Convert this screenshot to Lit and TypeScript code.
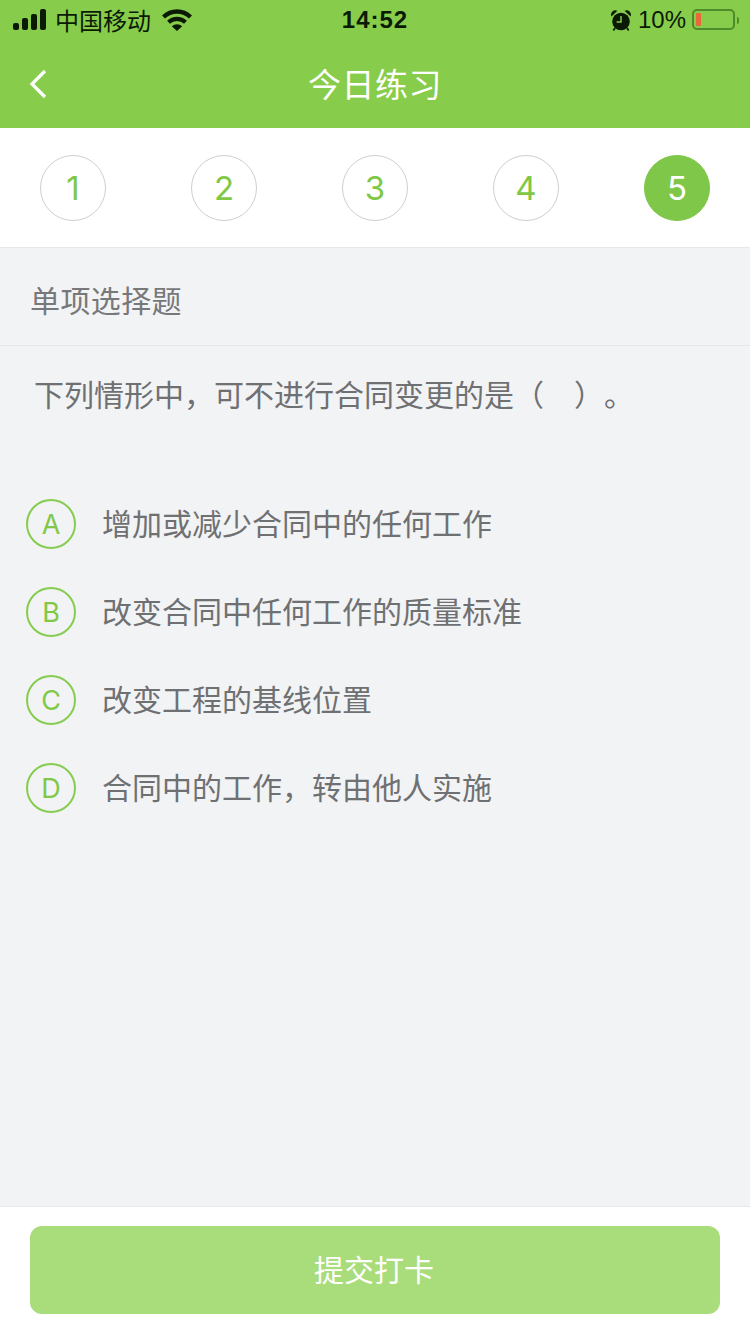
import { LitElement, html, css, svg } from "lit";
import { customElement, state } from "lit/decorators.js";

const OPTIONS = [
  { key: "A", text: "增加或减少合同中的任何工作" },
  { key: "B", text: "改变合同中任何工作的质量标准" },
  { key: "C", text: "改变工程的基线位置" },
  { key: "D", text: "合同中的工作，转由他人实施" },
];

const signal = svg`<svg class="signal" width="33" height="21" viewBox="0 0 33 21">
  <rect x="0" y="14" width="6" height="7" rx="2" fill="#0b1a05"/>
  <rect x="9" y="9" width="6" height="12" rx="2" fill="#0b1a05"/>
  <rect x="18" y="5" width="6" height="16" rx="2" fill="#0b1a05"/>
  <rect x="27" y="0" width="6" height="21" rx="2" fill="#0b1a05"/>
</svg>`;

const wifi = svg`<svg width="30" height="22" viewBox="0 0 30 22">
  <path d="M1.5 8 A19.5 19.5 0 0 1 28.5 8" fill="none" stroke="#0b1a05" stroke-width="4.4"/>
  <path d="M6.5 13.2 A12.5 12.5 0 0 1 23.5 13.2" fill="none" stroke="#0b1a05" stroke-width="4.2"/>
  <path d="M9.8 17.2 L15 22 L20.2 17.2 A7.6 7.6 0 0 0 9.8 17.2 Z" fill="#0b1a05"/>
</svg>`;

const alarm = svg`<svg width="20" height="21" viewBox="0 0 20 21">
  <circle cx="10" cy="11.5" r="8.8" fill="#0b1a05"/>
  <path d="M0.4 6.4 A4.4 4.4 0 0 1 6.4 0.8 Z M19.6 6.4 A4.4 4.4 0 0 0 13.6 0.8 Z" fill="#0b1a05"/>
  <path d="M4 18 L2.4 20.4 M16 18 L17.6 20.4" stroke="#0b1a05" stroke-width="1.8"/>
  <path d="M10 6 V12 H5.6" fill="none" stroke="#87cd4b" stroke-width="1.5"/>
</svg>`;

const back = svg`<svg width="18" height="30" viewBox="0 0 18 30">
  <path d="M16 2 L3 15 L16 28" fill="none" stroke="#fff" stroke-width="3.2"/>
</svg>`;

@customElement("app-root")
export class AppRoot extends LitElement {
  @state() current = 5;

  static styles = css`
    :host {
      display: block;
      width: 750px;
      height: 1334px;
      font-family: "Noto Sans CJK SC", "Liberation Sans", sans-serif;
      text-spacing-trim: space-all;
    }
    .page {
      height: 1334px;
      display: flex;
      flex-direction: column;
      background: #f2f3f5;
      color: #6f7072;
    }
    .head {
      height: 128px;
      background: #87cd4b;
      display: flex;
      flex-direction: column;
      flex: none;
    }
    .status {
      height: 40px;
      display: flex;
      align-items: center;
      justify-content: space-between;
      padding: 0 11px 0 13px;
      color: #0b1a05;
      font-size: 24px;
      position: relative;
    }
    .status-side {
      display: flex;
      align-items: center;
      position: relative;
      z-index: 1;
    }
    .signal {
      margin-top: -1px;
    }
    .carrier {
      margin: 0 11px 0 9px;
      line-height: 40px;
    }
    .clock {
      position: absolute;
      left: 0;
      right: 0;
      text-align: center;
      font-family: "Liberation Sans", sans-serif;
      font-weight: 700;
      font-size: 24px;
      letter-spacing: 1px;
    }
    .pct {
      font-family: "Liberation Sans", sans-serif;
      font-size: 24px;
      margin: 0 6px 0 7px;
    }
    .battery {
      width: 43px;
      height: 21px;
      margin-top: -1px;
      box-sizing: border-box;
      border: 2px solid #4f8a2b;
      border-radius: 5px;
      padding: 2px;
      display: flex;
    }
    .battery-fill {
      width: 5px;
      background: #e8683a;
      border-radius: 1px;
    }
    .battery-tip {
      width: 2px;
      height: 7px;
      background: #4f8a2b;
      margin-left: 2px;
      border-radius: 0 2px 2px 0;
    }
    .nav {
      flex: 1;
      display: flex;
      align-items: center;
      justify-content: center;
      position: relative;
      color: #fff;
      font-size: 33px;
      padding-bottom: 2px;
      letter-spacing: 0.5px;
    }
    .back {
      position: absolute;
      left: 29px;
      top: 29px;
      display: block;
      line-height: 0;
    }
    .steps {
      flex: none;
      height: 119px;
      background: #fff;
      border-bottom: 1px solid #e8e8ea;
      display: flex;
      justify-content: space-between;
      align-items: center;
      padding: 0 40px;
    }
    .step {
      width: 66px;
      height: 66px;
      box-sizing: border-box;
      border: 1px solid #cfcfcf;
      border-radius: 50%;
      display: flex;
      align-items: center;
      justify-content: center;
      color: #80c846;
      font-family: Inter, "Liberation Sans", sans-serif;
      font-weight: 400;
      font-size: 33px;
    }
    .step.on {
      background: #7fc748;
      border-color: #7fc748;
      color: #fff;
    }
    .type {
      flex: none;
      height: 98px;
      box-sizing: border-box;
      border-bottom: 1px solid #e6e7e9;
      padding: 4px 30px 0;
      display: flex;
      align-items: center;
      font-size: 30px;
      letter-spacing: 0.4px;
      color: #77787a;
    }
    .question {
      flex: none;
      padding: 27px 34px 0;
      font-size: 30px;
      line-height: 40px;
    }
    .options {
      flex: 1;
      padding: 86px 26px 0;
      display: flex;
      flex-direction: column;
      gap: 38px;
    }
    .option {
      display: flex;
      align-items: center;
      gap: 26px;
      height: 50px;
      font-size: 30px;
    }
    .option span {
      padding-bottom: 4px;
    }
    .letter {
      width: 50px;
      height: 50px;
      box-sizing: border-box;
      border: 2px solid #86cc50;
      border-radius: 50%;
      display: flex;
      align-items: center;
      justify-content: center;
      color: #80c846;
      font-family: Inter, "Liberation Sans", sans-serif;
      font-weight: 400;
      font-size: 27px;
    }
    .foot {
      flex: none;
      height: 128px;
      box-sizing: border-box;
      background: #fff;
      border-top: 1px solid #e8e8ea;
      padding: 19px 30px 20px;
    }
    .submit {
      width: 100%;
      height: 88px;
      border: 0;
      border-radius: 12px;
      background: #a9dc7a;
      color: #fff;
      font-family: inherit;
      font-size: 30px;
      padding: 0 2px 4px 0;
    }
  `;

  render() {
    return html`
      <div class="page">
        <div class="head">
          <div class="status">
            <div class="status-side">
              ${signal}<span class="carrier">中国移动</span>${wifi}
            </div>
            <div class="clock">14:52</div>
            <div class="status-side">
              ${alarm}<span class="pct">10%</span>
              <div class="battery"><div class="battery-fill"></div></div>
              <div class="battery-tip"></div>
            </div>
          </div>
          <div class="nav">
            <span class="back">${back}</span>
            今日练习
          </div>
        </div>
        <div class="steps">
          ${[1, 2, 3, 4, 5].map(
            (n) => html`<div class="step ${n === this.current ? "on" : ""}">${n}</div>`
          )}
        </div>
        <div class="type">单项选择题</div>
        <div class="question">下列情形中，可不进行合同变更的是（　）。</div>
        <div class="options">
          ${OPTIONS.map(
            (o) => html`<div class="option">
              <div class="letter">${o.key}</div>
              <span>${o.text}</span>
            </div>`
          )}
        </div>
        <div class="foot"><button class="submit">提交打卡</button></div>
      </div>
    `;
  }
}
